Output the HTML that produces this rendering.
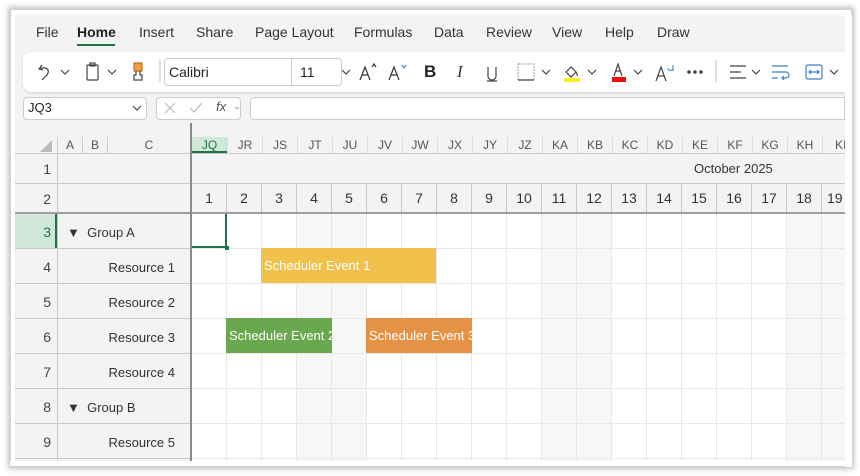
<!DOCTYPE html>
<html><head><meta charset="utf-8"><style>
*{box-sizing:border-box;margin:0;padding:0}
body{width:860px;height:476px;background:#fff;position:relative;overflow:hidden;font-family:"Liberation Sans",sans-serif;color:#242424}
.abs{position:absolute}
#frame{left:10px;top:9px;width:842px;height:458px;background:#fff;box-shadow:0 0 5px 2px rgba(0,0,0,.25);border:1px solid #d0d0d0}
#inner{left:15px;top:15px;width:830px;height:446px;background:#f3f3f3;overflow:hidden}
.tab{position:absolute;top:24px;font-size:14px;color:#333}
.tb{left:23px;top:52px;width:822px;height:40px;background:#fff;border-radius:8px 0 0 8px;box-shadow:0 1px 2px rgba(0,0,0,.15)}
.sel{background:#fff;border:1px solid #ccc;border-radius:4px;font-size:14px}
.ch{position:absolute;top:137px;height:16px;font-size:12px;color:#555;text-align:center;line-height:16px}
.rh{position:absolute;left:15px;width:42px;text-align:right;padding-right:6px;font-size:14px;color:#444}
.lbl{position:absolute;left:58px;width:132px;font-size:13px;color:#333}
.num{position:absolute;top:183px;height:30px;width:35px;text-align:center;line-height:30px;font-size:14px;color:#333;border-right:1px solid #c8c8c8}
.ev{position:absolute;height:35px;color:#fff;font-size:13px;line-height:36px;padding-left:3px;white-space:nowrap;overflow:hidden}
.we{position:absolute;top:214px;height:247px;width:70px;background:#f7f7f7}
</style></head><body>
<div id="frame" class="abs"></div>
<div id="inner" class="abs"></div>
<div class="tab" style="left:36px">File</div>
<div class="tab" style="left:77px;font-weight:bold;color:#222">Home</div>
<div class="abs" style="left:77px;top:44px;width:38px;height:2px;background:#217346"></div>
<div class="tab" style="left:139px">Insert</div>
<div class="tab" style="left:196px">Share</div>
<div class="tab" style="left:255px">Page Layout</div>
<div class="tab" style="left:354px">Formulas</div>
<div class="tab" style="left:434px">Data</div>
<div class="tab" style="left:486px">Review</div>
<div class="tab" style="left:552px">View</div>
<div class="tab" style="left:605px">Help</div>
<div class="tab" style="left:657px">Draw</div>
<div class="abs tb"></div>
<svg class="abs" style="left:30px;top:60px" width="815" height="26" viewBox="0 0 815 26" fill="none" stroke="#444" stroke-width="1.2">
<path d="M12 5 L9 9 L13 10 M9 9 C15 6 21 9 17 15 L12 20"/><path d="M31 10 l4 4 4-4"/>
<rect x="57" y="5" width="11" height="15" rx="1"/><rect x="60" y="3" width="5" height="3"/><path d="M78 10 l4 4 4-4"/>
<rect x="104" y="3" width="8" height="8" fill="#f0a040" stroke="#c07020"/><path d="M106 11 v4 h-2 v5 h8 v-5 h-2 v-4" />
<path d="M130 0 v22" stroke="#ccc"/>
<path d="M247 10 l4 4 4-4"/><path d="M312 10 l4 4 4-4"/>
<path d="M330 20 l5-13 5 13 M332 15 h6 M342 7 l2-3 2 3" stroke="#333"/>
<path d="M359 20 l5-13 5 13 M361 15 h6" stroke="#333"/><path d="M372 5 l2 3 2-3" stroke="#4a90d0"/>
<path d="M458 7 v9 a4 4 0 0 0 8 0 v-9 M457 21 h10"/>
<rect x="488" y="4" width="16" height="16" stroke="#aaa" stroke-dasharray="2 1"/><path d="M488 20 h16"/><path d="M512 10 l4 4 4-4"/>
<path d="M536 12 l5-5 5 5 -5 5z M546 12 c1 2 2 3 1 4"/><rect x="534" y="18" width="16" height="4" fill="#f8f020" stroke="none"/><path d="M558 10 l4 4 4-4"/>
<path d="M584 16 l4-12 4 12 M586 11 h4"/><rect x="582" y="17" width="14" height="5" fill="#e81010" stroke="none"/><path d="M604 10 l4 4 4-4"/>
<path d="M626 21 l5-14 5 14 M628 16 h6"/><path d="M638 8 a2.5 2.5 0 1 0 5 0 v-3 M643 9 v2" stroke="#4a90d0"/>
<circle cx="659" cy="12" r="1.2" fill="#333"/><circle cx="665" cy="12" r="1.2" fill="#333"/><circle cx="671" cy="12" r="1.2" fill="#333"/>
<path d="M686 0 v22" stroke="#ccc"/>
<path d="M700 6 h16 M700 12 h11 M700 18 h16"/><path d="M722 10 l4 4 4-4"/>
<path d="M742 6 h16 M742 12 h14 a3 3 0 0 1 0 6 h-4 M754 16 l-2 2 2 2 M742 18 h6" stroke="#3a80c8"/>
<rect x="776" y="5" width="16" height="14" rx="2" stroke="#3a80c8"/><path d="M779 12 h10 M781 10 l-2 2 2 2 M787 10 l2 2 -2 2" stroke="#3a80c8"/><path d="M800 10 l4 4 4-4"/>
</svg>
<div class="abs sel" style="left:164px;top:58px;width:178px;height:28px"></div>
<div class="abs" style="left:291px;top:58px;width:1px;height:28px;background:#ccc"></div>
<div class="abs" style="left:169px;top:64px;font-size:14px">Calibri</div>
<div class="abs" style="left:300px;top:64px;font-size:14px">11</div>
<div class="abs" style="left:424px;top:62px;font-size:17px;font-weight:bold">B</div>
<div class="abs" style="left:457px;top:62px;font-size:17px;font-style:italic;font-family:'Liberation Serif',serif;color:#333">I</div>
<div class="abs sel" style="left:23px;top:97px;width:124px;height:23px"></div>
<div class="abs" style="left:28px;top:100px;font-size:13px">JQ3</div>
<div class="abs sel" style="left:156px;top:97px;width:85px;height:23px"></div>
<div class="abs sel" style="left:250px;top:97px;width:595px;height:23px;border-radius:4px 0 0 4px"></div>
<svg class="abs" style="left:0;top:97px" width="250" height="23" fill="none" stroke-width="1.2">
<path d="M133 9 l4 4 4-4" stroke="#444"/>
<path d="M165 6 l10 10 M175 6 l-10 10" stroke="#bbb"/><path d="M190 11 l4 4 8-9" stroke="#bbb"/>
<path d="M235 10 l2 2 2-2" stroke="#bbb"/>
</svg>
<div class="abs" style="left:216px;top:99px;font-size:13px;font-style:italic;color:#555">fx</div>
<!-- column headers -->
<div class="abs" style="left:15px;top:153px;width:830px;height:1px;background:#c8c8c8"></div>
<svg class="abs" style="left:40px;top:140px" width="14" height="12"><path d="M12 0 V12 H0z" fill="#bbb"/></svg>
<div class="ch" style="left:57px;width:25px;border-left:1px solid #ccc">A</div>
<div class="ch" style="left:82px;width:25px;border-left:1px solid #ccc">B</div>
<div class="ch" style="left:107px;width:83px;border-left:1px solid #ccc">C</div>
<div class="ch" style="left:192px;width:35px;background:#cfe8d9;color:#217346;border-bottom:2px solid #217346">JQ</div>
<div class="ch" style="left:227px;width:35px;border-left:1px solid #ddd">JR</div>
<div class="ch" style="left:262px;width:35px;border-left:1px solid #ddd">JS</div>
<div class="ch" style="left:297px;width:35px;border-left:1px solid #ddd">JT</div>
<div class="ch" style="left:332px;width:35px;border-left:1px solid #ddd">JU</div>
<div class="ch" style="left:367px;width:35px;border-left:1px solid #ddd">JV</div>
<div class="ch" style="left:402px;width:35px;border-left:1px solid #ddd">JW</div>
<div class="ch" style="left:437px;width:35px;border-left:1px solid #ddd">JX</div>
<div class="ch" style="left:472px;width:35px;border-left:1px solid #ddd">JY</div>
<div class="ch" style="left:507px;width:35px;border-left:1px solid #ddd">JZ</div>
<div class="ch" style="left:542px;width:35px;border-left:1px solid #ddd">KA</div>
<div class="ch" style="left:577px;width:35px;border-left:1px solid #ddd">KB</div>
<div class="ch" style="left:612px;width:35px;border-left:1px solid #ddd">KC</div>
<div class="ch" style="left:647px;width:35px;border-left:1px solid #ddd">KD</div>
<div class="ch" style="left:682px;width:35px;border-left:1px solid #ddd">KE</div>
<div class="ch" style="left:717px;width:35px;border-left:1px solid #ddd">KF</div>
<div class="ch" style="left:752px;width:35px;border-left:1px solid #ddd">KG</div>
<div class="ch" style="left:787px;width:35px;border-left:1px solid #ddd">KH</div>
<div class="ch" style="left:822px;width:23px;border-left:1px solid #ddd;overflow:hidden;text-align:left;padding-left:12px">KI</div>
<!-- data area -->
<div class="abs" style="left:192px;top:214px;width:653px;height:247px;background:#fff"></div>
<div class="we" style="left:297px"></div><div class="we" style="left:542px"></div><div class="we" style="left:787px;width:58px"></div>
<div class="abs" style="left:192px;top:214px;width:653px;height:247px;background-image:repeating-linear-gradient(90deg,transparent 0 34px,#e8e8e8 34px 35px),repeating-linear-gradient(180deg,transparent 0 34px,#e8e8e8 34px 35px)"></div>
<!-- left header area -->
<div class="abs" style="left:15px;top:214px;width:175px;height:247px;background:#f3f3f3;background-image:repeating-linear-gradient(180deg,transparent 0 34px,#c8c8c8 34px 35px)"></div>
<div class="abs" style="left:15px;top:183px;width:830px;height:1px;background:#c8c8c8"></div>
<div class="abs" style="left:57px;top:153px;width:1px;height:308px;background:#c8c8c8"></div>
<div class="abs" style="top:161px;font-size:13px;color:#333;left:694px">October 2025</div>
<div class="num" style="left:192px">1</div><div class="num" style="left:227px">2</div><div class="num" style="left:262px">3</div><div class="num" style="left:297px">4</div><div class="num" style="left:332px">5</div><div class="num" style="left:367px">6</div><div class="num" style="left:402px">7</div><div class="num" style="left:437px">8</div><div class="num" style="left:472px">9</div><div class="num" style="left:507px">10</div><div class="num" style="left:542px">11</div><div class="num" style="left:577px">12</div><div class="num" style="left:612px">13</div><div class="num" style="left:647px">14</div><div class="num" style="left:682px">15</div><div class="num" style="left:717px">16</div><div class="num" style="left:752px">17</div><div class="num" style="left:787px">18</div><div class="num" style="left:822px;width:30px;text-align:left;padding-left:5px;border:none">19</div>
<div class="abs" style="left:15px;top:212px;width:830px;height:2px;background:#9e9e9e"></div>
<div class="abs" style="left:190px;top:123px;width:2px;height:338px;background:#8a8a8a"></div>
<!-- row headers -->
<div class="rh" style="top:161px">1</div>
<div class="rh" style="top:191px">2</div>
<div class="abs" style="left:15px;top:214px;width:42px;height:34px;background:#cfe8d9;border-right:2px solid #217346"></div>
<div class="rh" style="top:224px;color:#217346">3</div>
<div class="rh" style="top:259px">4</div>
<div class="rh" style="top:294px">5</div>
<div class="rh" style="top:329px">6</div>
<div class="rh" style="top:364px">7</div>
<div class="rh" style="top:399px">8</div>
<div class="rh" style="top:434px">9</div>
<div class="lbl" style="top:225px;left:67px">▼&nbsp; Group A</div>
<div class="lbl" style="top:260px;text-align:right;padding-right:15px">Resource 1</div>
<div class="lbl" style="top:295px;text-align:right;padding-right:15px">Resource 2</div>
<div class="lbl" style="top:330px;text-align:right;padding-right:15px">Resource 3</div>
<div class="lbl" style="top:365px;text-align:right;padding-right:15px">Resource 4</div>
<div class="lbl" style="top:400px;left:67px">▼&nbsp; Group B</div>
<div class="lbl" style="top:435px;text-align:right;padding-right:15px">Resource 5</div>
<!-- selection -->
<div class="abs" style="left:192px;top:214px;width:35px;height:34px;border-right:2px solid #217346;border-bottom:2px solid #217346"></div>
<div class="abs" style="left:225px;top:246px;width:4px;height:4px;background:#217346"></div>
<!-- events -->
<div class="ev" style="left:261px;top:248px;width:175px;background:#f0c14b">Scheduler Event 1</div>
<div class="ev" style="left:226px;top:318px;width:106px;background:#6aa84f">Scheduler Event 2</div>
<div class="ev" style="left:366px;top:318px;width:106px;background:#e69245">Scheduler Event 3</div>
<div class="abs" style="left:845px;top:15px;width:7px;height:452px;background:#fff"></div>
<div class="abs" style="left:10px;top:461px;width:842px;height:5px;background:#fff"></div>
</body></html>
